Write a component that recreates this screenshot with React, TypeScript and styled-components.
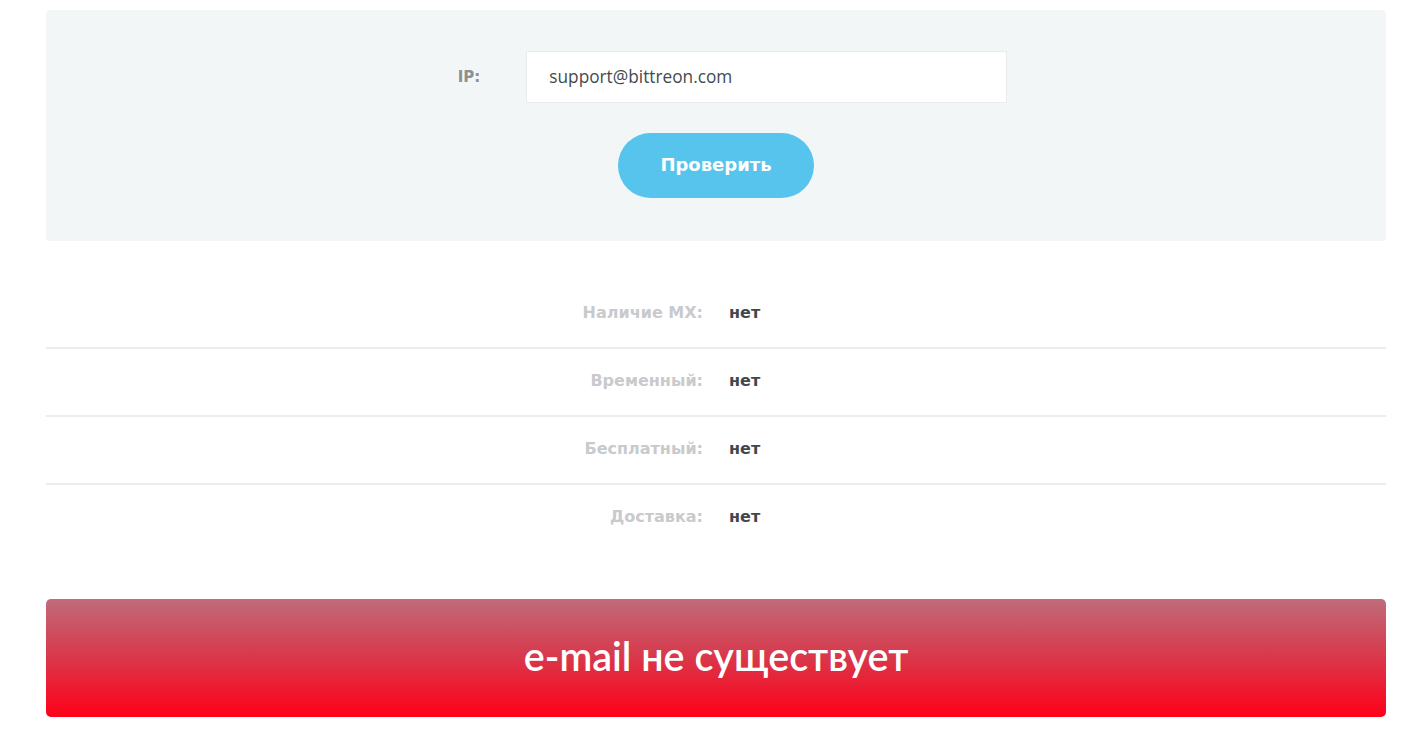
import styled, { createGlobalStyle } from "styled-components";

const GlobalStyle = createGlobalStyle`
  body {
    margin: 0;
    background: #ffffff;
    font-family: "DejaVu Sans", "Noto Sans", sans-serif;
  }
`;

const Page = styled.div`
  padding: 10px 41px 0 46px;
`;

const Panel = styled.div`
  background: #f3f6f7;
  border-radius: 4px;
  padding: 41px 0 43px;
  display: grid;
  justify-items: center;
  gap: 30px;
`;

const InputRow = styled.div`
  display: flex;
  align-items: center;
  gap: 46px;
  padding-left: 33px;
`;

const InputLabel = styled.label`
  font-family: "DejaVu Sans", sans-serif;
  font-weight: 700;
  font-size: 15px;
  color: #8d8f91;
`;

const TextInput = styled.input`
  box-sizing: border-box;
  width: 481px;
  height: 52px;
  border: 1px solid #e9ecee;
  background: #ffffff;
  padding: 0 22px 2px;
  font-family: "Open Sans", sans-serif;
  font-size: 17.25px;
  color: #454a50;
  outline: none;
`;

const CheckButton = styled.button`
  width: 196px;
  height: 65px;
  border: none;
  border-radius: 33px;
  background: #56c4ec;
  color: #ffffff;
  font-family: "DejaVu Sans", sans-serif;
  font-weight: 700;
  font-size: 18px;
  padding: 0 0 3px;
  cursor: pointer;
`;

const Results = styled.div`
  margin-top: 40px;
`;

const Row = styled.div<{ $last?: boolean }>`
  display: grid;
  grid-template-columns: 1fr 1fr;
  column-gap: 26px;
  align-items: center;
  box-sizing: border-box;
  height: 68px;
  padding-bottom: 3px;
  border-bottom: 2px solid ${(p) => (p.$last ? "transparent" : "#ececec")};
`;

const Key = styled.div`
  text-align: right;
  font-family: "DejaVu Sans", sans-serif;
  font-weight: 700;
  font-size: 16px;
  color: #c8cacd;
`;

const Value = styled.div`
  font-family: "DejaVu Sans", sans-serif;
  font-weight: 700;
  font-size: 16px;
  color: #43474c;
`;

const Banner = styled.div`
  box-sizing: border-box;
  margin-top: 46px;
  height: 118px;
  padding-bottom: 6px;
  border-radius: 5px;
  background: linear-gradient(to bottom, #c06c7a 0%, #d63c4f 45%, #ff0018 100%);
  display: flex;
  align-items: center;
  justify-content: center;
  color: #ffffff;
  font-family: "Lato", sans-serif;
  font-weight: 600;
  font-size: 39.5px;
`;

const rows = [
  { key: "Наличие MX:", value: "нет" },
  { key: "Временный:", value: "нет" },
  { key: "Бесплатный:", value: "нет" },
  { key: "Доставка:", value: "нет" },
];

export default function App() {
  return (
    <>
      <GlobalStyle />
      <Page>
        <Panel>
          <InputRow>
            <InputLabel>IP:</InputLabel>
            <TextInput defaultValue="support@bittreon.com" />
          </InputRow>
          <CheckButton>Проверить</CheckButton>
        </Panel>
        <Results>
          {rows.map((r, i) => (
            <Row key={r.key} $last={i === rows.length - 1}>
              <Key>{r.key}</Key>
              <Value>{r.value}</Value>
            </Row>
          ))}
        </Results>
        <Banner>e-mail не существует</Banner>
      </Page>
    </>
  );
}
